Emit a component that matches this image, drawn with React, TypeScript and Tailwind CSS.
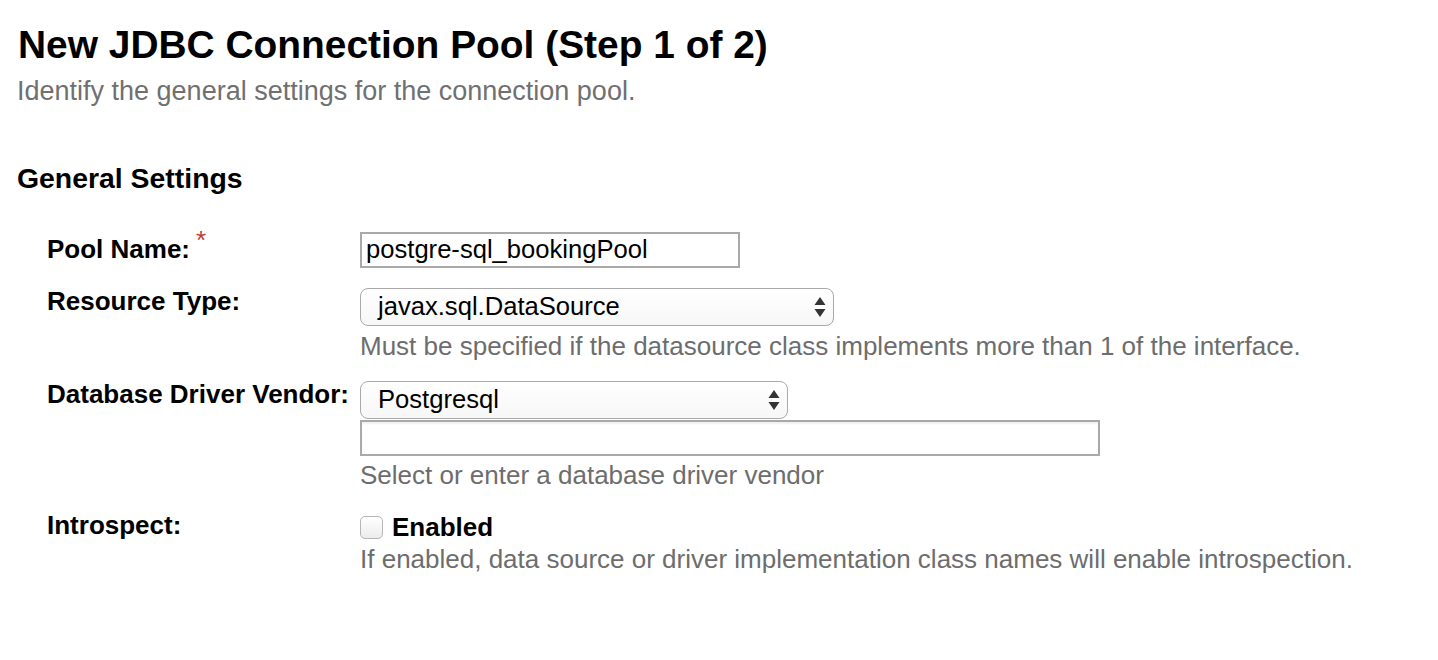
import React from 'react';

const SelectArrows: React.FC = () => (
  <svg width="12" height="22" viewBox="0 0 12 22" className="shrink-0">
    <path d="M6 1 L11.5 9 L0.5 9 Z" fill="#333" />
    <path d="M6 21 L11.5 13 L0.5 13 Z" fill="#333" />
  </svg>
);

const FakeSelect: React.FC<{ value: string; width: string }> = ({ value, width }) => (
  <div
    className={`${width} h-[38px] flex items-center justify-between pl-[17px] pr-[7px] border-[1.5px] border-[#a9a9a9] rounded-[8px] bg-gradient-to-b from-white to-[#f7f7f7] text-[25.6px] text-black leading-none`}
  >
    <span>{value}</span>
    <SelectArrows />
  </div>
);

const Help: React.FC<{ children: React.ReactNode }> = ({ children }) => (
  <div className="text-[26px] leading-[30px] text-[#6d6d6d]">{children}</div>
);

const Label: React.FC<{ children: React.ReactNode; className?: string }> = ({ children, className }) => (
  <div className={`text-[26px] leading-[30px] font-bold text-black ${className ?? ''}`}>{children}</div>
);

export default function App() {
  return (
    <div className="min-h-[660px] bg-white font-['Liberation_Sans',Arial,sans-serif] text-black">
      <div className="pl-[18px] pt-[22px]">
        <h1 className="text-[38.9px] leading-[46px] font-bold">New JDBC Connection Pool (Step 1 of 2)</h1>
        <p className="text-[27px] leading-[30px] text-[#707070] mt-[8px] -ml-[1px]">
          Identify the general settings for the connection pool.
        </p>
        <h2 className="mt-[55px] text-[28.4px] leading-[34px] font-bold -ml-[1px]">General Settings</h2>
      </div>

      <div className="grid grid-cols-[313px_1fr] pl-[47px] mt-[37px] gap-y-[20px]">
        <Label className="pt-[2px]">
          Pool Name:<span className="relative -top-[9px] ml-[6px] text-[26px] text-[#c23b32] font-normal">*</span>
        </Label>
        <div>
          <div className="w-[380px] h-[36px] border-2 border-[#a9a9a9] flex items-center pl-[4px] text-[25.6px] leading-none">
            postgre-sql_bookingPool
          </div>
        </div>

        <Label className="-mt-[2px]">Resource Type:</Label>
        <div>
          <FakeSelect value="javax.sql.DataSource" width="w-[474px]" />
          <div className="mt-[5px]">
            <Help>Must be specified if the datasource class implements more than 1 of the interface.</Help>
          </div>
        </div>

        <Label className="-mt-[2px]">Database Driver Vendor:</Label>
        <div>
          <FakeSelect value="Postgresql" width="w-[428px]" />
          <div className="mt-[1px] w-[740px] h-[36px] border-2 border-[#a9a9a9] shadow-[inset_0_2px_2px_rgba(0,0,0,0.06)]" />
          <div className="mt-[4px]">
            <Help>Select or enter a database driver vendor</Help>
          </div>
        </div>

        <Label>Introspect:</Label>
        <div>
          <div className="flex items-center h-[34px]">
            <div className="w-[23px] h-[23px] rounded-[5px] border border-[#b5b5b5] bg-gradient-to-b from-white to-[#ececec]" />
            <span className="ml-[9px] text-[26px] font-bold leading-[30px]">Enabled</span>
          </div>
          <Help>If enabled, data source or driver implementation class names will enable introspection.</Help>
        </div>
      </div>
    </div>
  );
}
